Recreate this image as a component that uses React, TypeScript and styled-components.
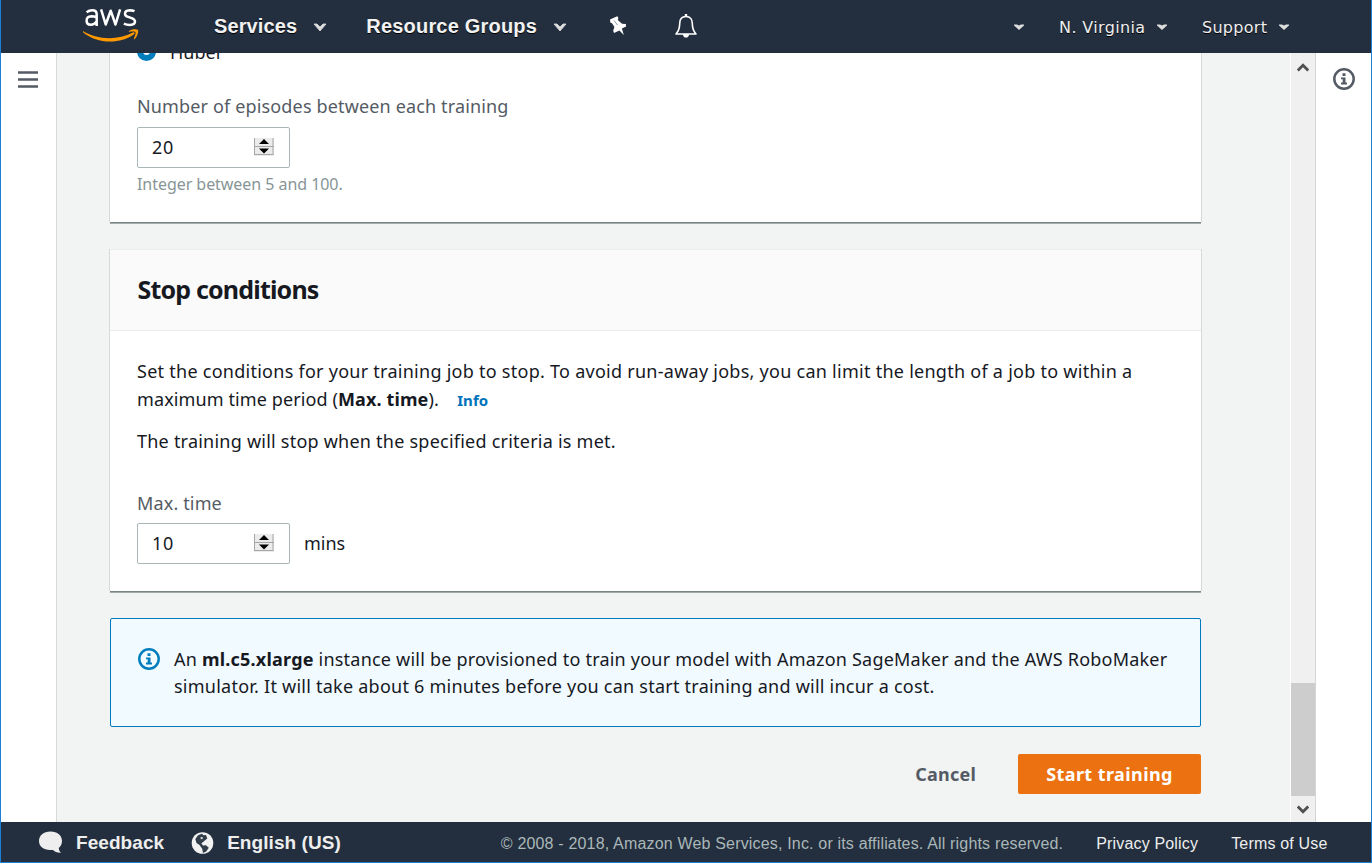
import React from 'react';
import styled, { createGlobalStyle } from 'styled-components';

const Global = createGlobalStyle`
  * { box-sizing: border-box; }
  body { margin: 0; overflow: hidden; }
  button { font: inherit; border: 0; background: none; padding: 0; margin: 0; }
`;

const ember = `'Noto Sans', 'Open Sans', sans-serif`;
const arial = `'Liberation Sans', Arial, sans-serif`;

const Window = styled.div`
  width: 1372px;
  height: 863px;
  display: flex;
  flex-direction: column;
  border: solid #1b80d6;
  border-width: 0 1px 1px;
  background: #fff;
  color: #16191f;
  font-family: ${ember};
  font-size: 18px;
`;

const Nav = styled.header`
  flex: 0 0 53px;
  display: flex;
  align-items: center;
  background: #232f3e;
  color: #eee;
  overflow: hidden;
`;

const NavItem = styled.button<{ $left: number; $track?: number }>`
  display: flex;
  align-items: center;
  margin: 0 0 2px ${p => p.$left}px;
  color: #f2f2f2;
  font: bold 20px/24px ${arial};
  letter-spacing: ${p => p.$track ?? 0}px;
  text-shadow: 0 1px 0 #000;
  white-space: nowrap;
`;

const NavSmall = styled.button<{ $left: number; $track?: number }>`
  display: flex;
  align-items: center;
  margin: 2px 0 0 ${p => p.$left}px;
  color: #eee;
  font: 16px/24px 'DejaVu Sans', Verdana, sans-serif;
  letter-spacing: ${p => p.$track ?? 0}px;
  text-shadow: 0 1px 0 #000;
  white-space: nowrap;
`;

const Glyph = styled.svg<{ $left?: number; $top?: number }>`
  display: block;
  flex: none;
  margin-left: ${p => p.$left ?? 0}px;
  margin-top: ${p => p.$top ?? 0}px;
`;

const Main = styled.div`
  flex: 1;
  min-height: 0;
  display: flex;
`;

const LeftRail = styled.aside`
  flex: 0 0 56px;
  border-right: 1px solid #d5dbdb;
  padding: 18px 0 0 17px;
`;

const RightRail = styled.aside`
  flex: 1;
  border-left: 1px solid #d5d5d5;
  padding: 15px 0 0 17px;
`;

const Content = styled.main`
  flex: 0 0 1233px;
  background: #f2f3f3;
  padding: 0 89px 0 53px;
  overflow: hidden;
`;

const Card = styled.section<{ $h: number; $top?: number; $open?: boolean }>`
  height: ${p => p.$h}px;
  margin-top: ${p => p.$top ?? 0}px;
  background: #fff;
  border-top: ${p => (p.$open ? '0' : '1px')} solid #eaeded;
  box-shadow: 0 1px 0 #7b8585, 0 2px 0 #a3abab, -1px 0 0 #d5dbdb, 1px 0 0 #d5dbdb;
`;

const CardHead = styled.div`
  height: 81px;
  padding: 23px 27.5px 0;
  background: #fafafa;
  border-bottom: 1px solid #eaeded;
`;

const Heading = styled.h2`
  margin: 0;
  font-size: 25px;
  line-height: 32px;
  font-weight: 700;
  letter-spacing: -0.82px;
`;

const CardBody = styled.div<{ $top: number }>`
  padding: ${p => p.$top}px 27px 0;
`;

const Line = styled.div<{ $h?: number; $track?: number; $size?: number; $color?: string; $top?: number }>`
  height: ${p => p.$h ?? 28}px;
  line-height: ${p => p.$h ?? 28}px;
  margin-top: ${p => p.$top ?? 0}px;
  font-size: ${p => p.$size ?? 18}px;
  letter-spacing: ${p => p.$track ?? 0.24}px;
  color: ${p => p.$color ?? '#16191f'};
  white-space: nowrap;
`;

const InfoLink = styled.a`
  margin-left: 13.5px;
  color: #0073bb;
  font-size: 15px;
  font-weight: 700;
`;

const Field = styled.div<{ $top: number }>`
  display: flex;
  margin-top: ${p => p.$top}px;
  height: 41px;
  line-height: 41px;
`;

const NumberBox = styled.div`
  width: 153px;
  height: 41px;
  display: flex;
  justify-content: space-between;
  padding: 0 15px 0 14px;
  border: 1px solid #aab7b8;
  border-radius: 2px;
  background: #fff;
  line-height: 39px;
  letter-spacing: 0.8px;
  margin-right: 14px;
`;

const RadioRow = styled.div`
  display: flex;
  height: 14px;
`;

const Radio = styled.span`
  width: 19px;
  height: 19px;
  margin: -11px 14px 0 0;
  border: 6px solid #007dbc;
  border-radius: 50%;
  background: #fff;
`;

const RadioLabel = styled.span`
  margin-top: -15px;
  line-height: 28px;
`;

const Alert = styled.section`
  height: 109px;
  margin-top: 27px;
  padding: 27px;
  display: flex;
  border: 1px solid #0079bd;
  border-radius: 2px;
  background: #f1faff;
`;

const AlertIcon = styled.div`
  padding-top: 2px;
`;

const AlertText = styled.div`
  margin-left: 14px;
`;

const Actions = styled.div`
  display: flex;
  justify-content: flex-end;
  align-items: center;
  margin-top: 27px;
  font-weight: 700;
`;

const Cancel = styled.button`
  color: #545b64;
  letter-spacing: 0.2px;
  margin-right: 42px;
`;

const Primary = styled.button`
  width: 183px;
  height: 40px;
  border-radius: 2px;
  background: #ec7211;
  color: #fff;
  letter-spacing: 0.42px;
`;

const Scroll = styled.div`
  flex: 0 0 25px;
  display: flex;
  flex-direction: column;
  align-items: center;
  border-left: 1px solid #fff;
  background: #f0f0f0;
`;

const Thumb = styled.div`
  width: 24px;
  height: 113px;
  margin: 611px 0 9px;
  background: #cdcdcd;
`;

const Footer = styled.footer`
  flex: 0 0 40px;
  display: flex;
  align-items: center;
  background: #232f3e;
`;

const FootStrong = styled.span`
  margin: 2px 0 0 13px;
  font: bold 19px/24px ${arial};
  color: #eee;
  letter-spacing: 0.06px;
  white-space: nowrap;
`;

const FootItem = styled.span<{ $left: number; $color?: string }>`
  margin: 3px 0 0 ${p => p.$left}px;
  font: 16px/24px ${arial};
  color: ${p => p.$color ?? '#eee'};
  letter-spacing: 0.175px;
  white-space: nowrap;
`;

const Chevron = ({ left }: { left: number }) => (
  <Glyph $left={left} $top={3} width="14" height="9" viewBox="0 0 14 9">
    <path d="M1 1h3l3 3 3-3h3L7 8z" fill="#ddd" stroke="#ddd" strokeWidth=".8" />
  </Glyph>
);

const Caret = ({ left }: { left: number }) => (
  <Glyph $left={left} $top={-2} width="10" height="6" viewBox="0 0 10 6">
    <path d="M0 .5h3l2 1 2-1h3v1L5 6 0 1.500z" fill="#ddd" />
  </Glyph>
);

const InfoMark = ({ color }: { color: string }) => (
  <Glyph width="22" height="22" viewBox="0 0 22 22">
    <circle cx="11" cy="11" r="9.700" fill="none" stroke={color} strokeWidth="2.500" />
    <path d="M9.500 5.200h3V8h-3zM8 9.400h4.500v5.200H14V16.500H8v-1.900h1.700v-3.300H8z" fill={color} />
  </Glyph>
);

const Spinner = () => (
  <Glyph $top={10} width="20" height="18" viewBox="0 0 20 18">
    <path d="M0 0h20v18H0z" fill="#ebebeb" />
    <path d="M.5 0v17M19 0v17M0 8.500h20M0 16.500h19" stroke="#a6a6a6" fill="none" />
    <path d="M10 1l5 5H5zM10 15.500l5-5H5z" fill="#000" />
  </Glyph>
);

const AwsLogo = () => (
  <Glyph $left={82} width="58" height="53" viewBox="0 0 58 53">
    <g fill="none" stroke="#fff" strokeWidth="2.500" strokeLinejoin="round">
      <path d="M3.600 12.200Q6.200 10.300 9.300 10.300q4.400 0 4.400 4.200V26M13.700 17.300q-2.700-1-5.200-1-4.900.2-4.900 4.400 0 4 4.200 4 3.500 0 5.900-3.200" />
      <path d="M18.100 9.300l4.600 15.200 5-13.800 4.800 13.800 4.600-15.200" />
      <path d="M51.500 11.200q-2.200-1-4.900-1-4.600.2-4.600 3.500 0 2.200 3.200 3.200l3.400 1.200q3.400 1.200 3.400 3.500 0 3.300-5.100 3.300-3.400 0-6-1.300" />
    </g>
    <path d="M0 31c13 8.500 34 10 50 1.500 1.500-.7 2.300.8 1 1.700C37 44.500 14 44 0 32.200z" fill="#f90" />
    <path d="M46 30.900c2.500-2 8-2 9-.8.800 1-.5 6.800-3.600 9.200-.7.300-.8-.2-.5-.8 1-2 2.200-5.400 1.500-6.400-.7-1-4.200-.6-6-.4-.8 0-.8-.4-.4-.8z" fill="#f90" />
  </Glyph>
);

export default function App() {
  return (
    <>
      <Global />
      <Window>
        <Nav>
          <AwsLogo />
          <NavItem $left={73} $track={0.12}>Services<Chevron left={16} /></NavItem>
          <NavItem $left={39} $track={0.2}>Resource Groups<Chevron left={16} /></NavItem>
          <Glyph $left={42} $top={-1} width="20" height="20" viewBox="0 0 20 20">
            <path d="M1 3.500L8.200.2l1.200 1.600L8.800 4l4.200 3.700 3.800.2.300 2.500-4.200 2 1.900 6.600-4.400-4.600L5 17l-.8-2.300 1.200-3.600L3 7.200l-1.700-.8z" fill="#fff" />
            <path d="M5 4.500l3.600 4.700" stroke="#8790a0" strokeWidth=".9" />
          </Glyph>
          <Glyph $left={45} $top={-2} width="24" height="26" viewBox="0 0 24 26">
            <path d="M12 3.500c-4.300 0-6.300 3-6.300 7 0 5.500-1 7.500-3.700 10.500h20c-2.700-3-3.700-5-3.700-10.500 0-4-2-7-6.300-7z" fill="none" stroke="#fff" strokeWidth="1.600" strokeLinejoin="round" />
            <path d="M10.800 1h2.400v3h-2.400zM8.800 21h6.400c-.3 2.500-1.400 3.600-3.200 3.600S9.100 23.500 8.800 21z" fill="#fff" />
          </Glyph>
          <NavSmall $left={315.5}><Caret left={0} /></NavSmall>
          <NavSmall $left={35.5} $track={0.35}>N. Virginia<Caret left={12} /></NavSmall>
          <NavSmall $left={34.5} $track={0.3}>Support<Caret left={12} /></NavSmall>
        </Nav>
        <Main>
          <LeftRail>
            <Glyph width="20" height="17" viewBox="0 0 20 17">
              <path d="M0 1.500h20M0 8.500h20M0 15.500h20" stroke="#545b64" strokeWidth="2.600" />
            </Glyph>
          </LeftRail>
          <Content>
            <Card $h={169} $open>
              <CardBody $top={0}>
                <RadioRow><Radio /><RadioLabel>Huber</RadioLabel></RadioRow>
                <Line $top={25} $track={0.15} $color="#545b64">Number of episodes between each training</Line>
                <Field $top={7}><NumberBox>20<Spinner /></NumberBox></Field>
                <Line $h={24} $top={4} $size={16} $track={-0.05} $color="#879596">Integer between 5 and 100.</Line>
              </CardBody>
            </Card>
            <Card $h={342} $top={27}>
              <CardHead><Heading>Stop conditions</Heading></CardHead>
              <CardBody $top={26}>
                <Line $track={0.263}>Set the conditions for your training job to stop. To avoid run-away jobs, you can limit the length of a job to within a</Line>
                <Line $track={0.11}>maximum time period (<b>Max. time</b>). <InfoLink>Info</InfoLink></Line>
                <Line $top={14} $track={0.23}>The training will stop when the specified criteria is met.</Line>
                <Line $top={34} $track={0.15} $color="#545b64">Max. time</Line>
                <Field $top={6}><NumberBox>10<Spinner /></NumberBox>mins</Field>
              </CardBody>
            </Card>
            <Alert>
              <AlertIcon><InfoMark color="#007dbc" /></AlertIcon>
              <AlertText>
                <Line $h={27} $track={0.215}>An <b>ml.c5.xlarge</b> instance will be provisioned to train your model with Amazon SageMaker and the AWS RoboMaker</Line>
                <Line $h={27}>simulator. It will take about 6 minutes before you can start training and will incur a cost.</Line>
              </AlertText>
            </Alert>
            <Actions><Cancel>Cancel</Cancel><Primary>Start training</Primary></Actions>
          </Content>
          <Scroll>
            <Glyph $top={10} width="12" height="9" viewBox="0 0 12 9"><path d="M.8 7.500L6 2.300l5.200 5.200" stroke="#505050" strokeWidth="2.800" fill="none" /></Glyph>
            <Thumb />
            <Glyph width="12" height="9" viewBox="0 0 12 9"><path d="M.8 1.500L6 6.700l5.200-5.200" stroke="#505050" strokeWidth="2.800" fill="none" /></Glyph>
          </Scroll>
          <RightRail><InfoMark color="#545b64" /></RightRail>
        </Main>
        <Footer>
          <Glyph $left={37} width="25" height="24" viewBox="0 0 25 24">
            <path d="M12.500 1.500C5.500 1.500 1 5.500 1 11s4.500 9 11 9h3c2 2 5 3 8 2.700-1.500-1.300-2.200-3-2.200-4.700 2-1.700 3.200-4 3.200-7 0-5.500-4.500-9.500-11.500-9.500z" fill="#eee" />
          </Glyph>
          <FootStrong>Feedback</FootStrong>
          <Glyph $left={26} $top={1} width="24" height="24" viewBox="0 0 24 24">
            <circle cx="12.500" cy="12" r="10.800" fill="#f2f2f2" />
            <path d="M5.300 8L8 4.300 12 2.800l1.500 1.500L16 4l1.300 3.500-2.800 2.200-1.600 1.600-1.600.9 1.700 2.200 3-.2 2.800 2.600-2.600 3.600L13 22l-.8-4.200L9.500 14 6.500 12z" fill="#323d4a" />
            <path d="M10.500 6l2.500.3-.5 1.600-1.700.3z" fill="#d5d5d5" />
          </Glyph>
          <FootStrong>English (US)</FootStrong>
          <FootItem $left={160} $color="#aab7b8">© 2008 - 2018, Amazon Web Services, Inc. or its affiliates. All rights reserved.</FootItem>
          <FootItem $left={33}>Privacy Policy</FootItem>
          <FootItem $left={33}>Terms of Use</FootItem>
        </Footer>
      </Window>
    </>
  );
}
